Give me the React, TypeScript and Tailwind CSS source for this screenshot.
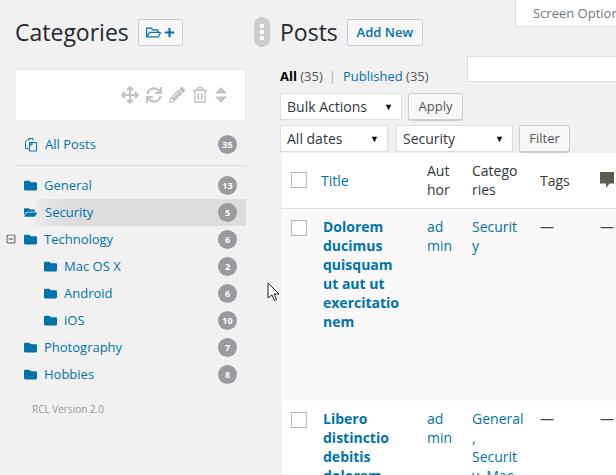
import { FaFolder, FaFolderOpen, FaRegFolderOpen, FaPlus, FaArrowsAlt, FaSync, FaPencilAlt, FaRegTrashAlt, FaRegMinusSquare } from "react-icons/fa";

const cats = [
  { n: "General", c: 13 },
  { n: "Security", c: 5, open: true },
  { n: "Technology", c: 6, tree: true },
  { n: "Mac OS X", c: 2, sub: true },
  { n: "Android", c: 6, sub: true },
  { n: "iOS", c: 10, sub: true },
  { n: "Photography", c: 7 },
  { n: "Hobbies", c: 8 },
];

function Badge({ c }: { c: number }) {
  return (
    <span className="flex h-[19px] w-[19px] items-center justify-center rounded-full bg-[#999ba0] text-[9px] font-bold leading-none text-white">
      {c}
    </span>
  );
}

function Select({ label, w }: { label: string; w: string }) {
  return (
    <div className={`${w} flex h-[27px] items-center justify-between border border-[#dddddd] bg-white pl-[6px] pr-[8px] text-[14px] text-[#32373c]`}>
      <span>{label}</span>
      <span className="text-[9px] leading-none text-black">▼</span>
    </div>
  );
}

function Btn({ label, w }: { label: string; w: string }) {
  return (
    <div className={`${w} flex h-[27px] items-center justify-center rounded-[3px] border border-[#cccccc] bg-[#f7f7f7] text-[13px] text-[#555555] shadow-[0_1px_0_#cccccc]`}>
      {label}
    </div>
  );
}

function Check() {
  return <span className="block h-[16px] w-[16px] border border-[#b4b9be] bg-white" />;
}

function Row({ bg, h, title, cats: c }: { bg: string; h: string; title: string[]; cats: string[] }) {
  return (
    <tr className={`${bg} ${h} align-top`}>
      <td className="pl-[9px] pt-[11px]"><Check /></td>
      <td className="pl-[10px] pt-[8px] font-bold text-[#0073aa]">{title.map((t) => <div key={t}>{t}</div>)}</td>
      <td className="pl-[10px] pt-[8px] text-[#0073aa]"><div>ad</div><div>min</div></td>
      <td className="pl-[10px] pt-[8px] text-[#0073aa]">{c.map((t) => <div key={t}>{t}</div>)}</td>
      <td className="pl-[10px] pt-[8px] text-[#444]">—</td>
      <td className="pl-[10px] pt-[8px] text-[#444]">—</td>
    </tr>
  );
}

export default function App() {
  return (
    <div className="relative flex h-[475px] w-[616px] overflow-hidden bg-[#f1f1f1] font-['Open_Sans',sans-serif] text-[13px] leading-[19px] text-[#444]">
      <aside className="w-[254px] shrink-0 pl-[15px] pr-[8px] pt-[19px]">
        <div className="flex h-[27px] items-center">
          <h1 className="text-[23px] font-normal leading-[27px] text-[#23282d]">Categories</h1>
          <div className="ml-[9px] flex h-[27px] w-[45px] items-center justify-center gap-[3px] rounded-[2px] border border-[#cccccc] bg-[#f7f7f7] text-[#0073aa]">
            <FaRegFolderOpen className="text-[15px]" />
            <FaPlus className="text-[11px]" />
          </div>
        </div>
        <div className="mt-[23px] flex h-[52px] items-center justify-end gap-[7px] border border-[#ececec] bg-white pr-[18px] text-[#c3c3c3]">
          <FaArrowsAlt className="text-[18px]" />
          <FaSync className="text-[16px]" />
          <FaPencilAlt className="text-[16px]" />
          <FaRegTrashAlt className="text-[16px]" />
          <svg viewBox="0 0 12 16" className="h-[16px] w-[12px]">
            <path fill="#c3c3c3" d="M6 0l6 6.500H0zM6 16L0 9.500h12z" />
          </svg>
        </div>
        <div className="mt-[13px] flex h-[20px] items-center justify-between pl-[9px] pr-[9px] text-[#0073aa]">
          <span className="flex items-center gap-[7px]">
            <svg viewBox="0 0 14 15" className="h-[15px] w-[14px]" fill="none" stroke="#0073aa" strokeWidth="1">
              <path d="M5 3.500V1.500h4v2M4.500 11.500H1.500V5L4 2.500h1" />
              <path d="M5.500 5.500H9l3.500 0v8.500h-7zM5.500 8l2.500-2.500V8z" />
            </svg>
            All Posts
          </span>
          <Badge c={35} />
        </div>
        <div className="mt-[11px] mb-[6px] h-px bg-[#dddddd]" />
        <ul>
          {cats.map((c) => (
            <li key={c.n} className={`relative flex h-[27px] items-center justify-between pr-[9px] text-[#0073aa] ${c.sub ? "pl-[29px]" : "pl-[9px]"}`}>
              {c.open && <span className="absolute inset-y-0 left-[20px] right-0 bg-linear-to-r from-[#ebebeb] to-[#dddddd] to-[15%]" />}
              {c.tree && <FaRegMinusSquare className="absolute left-[-9px] top-[8px] text-[10px] text-[#555]" />}
              <span className="relative flex items-center gap-[7px]">
                {c.open ? <FaFolderOpen className="text-[13px]" /> : <FaFolder className="text-[13px]" />}
                <span className={c.open ? "ml-[1px]" : ""}>{c.n}</span>
              </span>
              <span className="relative"><Badge c={c.c} /></span>
            </li>
          ))}
        </ul>
        <div className="mt-[14px] pl-[17px] text-[10px] leading-[14px] text-[#999999]">RCL Version 2.0</div>
      </aside>

      <div className="mt-[17px] h-[30px] w-[16px] shrink-0 self-start">
        <div className="flex h-full flex-col items-center justify-center gap-[2px] rounded-[8px] bg-[#cdcdcd]">
          <span className="h-[4px] w-[4px] bg-white" />
          <span className="h-[4px] w-[4px] bg-white" />
          <span className="h-[4px] w-[4px] bg-white" />
        </div>
      </div>

      <main className="ml-[10px] min-w-0 flex-1 pt-[19px]">
        <div className="flex h-[27px] items-center">
          <h1 className="text-[23px] font-normal leading-[27px] text-[#23282d]">Posts</h1>
          <div className="ml-[9px] flex h-[27px] w-[76px] items-center justify-center rounded-[2px] border border-[#cccccc] bg-[#f7f7f7] text-[13px] font-semibold text-[#0073aa]">Add New</div>
        </div>
        <div className="mt-[10px] flex h-[30px] items-end">
          <div className="flex h-[20px] w-[187px] shrink-0 items-center text-[13px] text-[#555]">
            <b className="text-black">All</b>&nbsp;(35)<span className="ml-[6px] mr-[7px] text-[#aaaaaa]">|</span><span className="text-[#0073aa]">Published</span>&nbsp;(35)
          </div>
          <div className="h-[26px] w-[160px] shrink-0 self-start border border-[#dddddd] bg-white" />
        </div>
        <div className="mt-[7px] flex gap-[6px]">
          <Select label="Bulk Actions" w="w-[122px]" />
          <Btn label="Apply" w="w-[55px]" />
        </div>
        <div className="mt-[5px] flex gap-[8px]">
          <Select label="All dates" w="w-[108px]" />
          <Select label="Security" w="w-[117px]" />
          <Btn label="Filter" w="w-[51px] -ml-[2px]" />
        </div>
        <table className="ml-[2px] mt-[1px] w-[400px] table-fixed border-collapse text-[14px] leading-[19px]">
          <colgroup>
            <col className="w-[31px]" /><col className="w-[104px]" /><col className="w-[45px]" /><col className="w-[68px]" /><col className="w-[60px]" /><col className="w-[92px]" />
          </colgroup>
          <thead>
            <tr className="h-[55px] border-b border-[#e1e1e1] bg-white">
              <td className="pl-[9px]"><Check /></td>
              <td className="pl-[8px] text-[#0073aa]">Title</td>
              <td className="pl-[10px] text-[#32373c]"><div>Aut</div><div>hor</div></td>
              <td className="pl-[10px] text-[#32373c]"><div>Catego</div><div>ries</div></td>
              <td className="pl-[10px] text-[#32373c]">Tags</td>
              <td className="pl-[10px]">
                <svg viewBox="0 0 14 16" className="h-[16px] w-[14px]"><path fill="#5c5a4a" d="M0 0h14v11.500h-4.500L6 16v-4.500H0z" /></svg>
              </td>
            </tr>
          </thead>
          <tbody>
            <Row bg="bg-[#f9f9f9]" h="h-[193px]" title={["Dolorem", "ducimus", "quisquam", "ut aut ut", "exercitatio", "nem"]} cats={["Securit", "y"]} />
            <Row bg="bg-white" h="h-[193px]" title={["Libero", "distinctio", "debitis", "dolorem"]} cats={["General", ",", "Securit", "y, Mac"]} />
          </tbody>
        </table>
      </main>

      <div className="absolute right-0 top-0 flex h-[27px] w-[101px] items-center overflow-hidden whitespace-nowrap border border-t-0 border-r-0 border-[#dddddd] bg-white pl-[17px] text-[13px] text-[#72777c]">Screen Options</div>

      <svg viewBox="0 0 12 20" className="absolute left-[267px] top-[282px] h-[20px] w-[12px]">
        <path d="M1 1v15l4-3 2.500 5.500 2-1L7 12h5z" fill="#fff" stroke="#222" strokeWidth="1" />
      </svg>
    </div>
  );
}
